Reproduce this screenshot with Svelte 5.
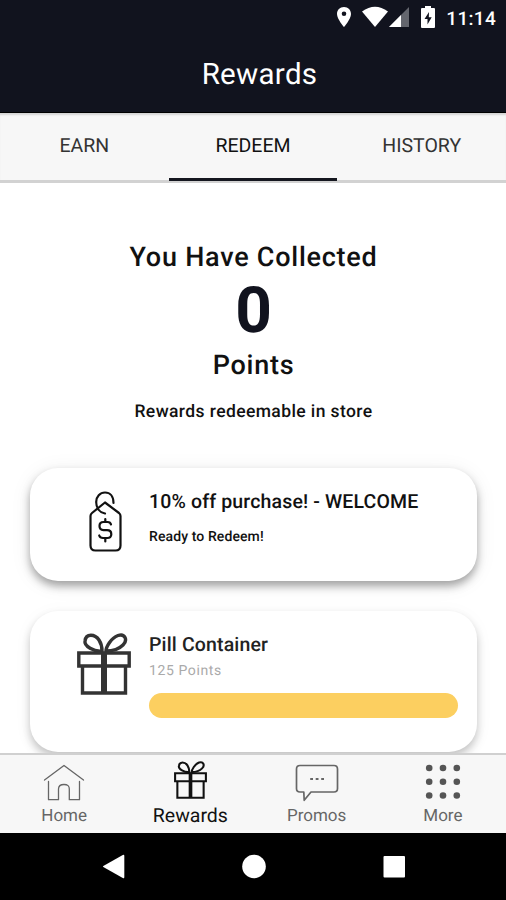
<script>
  let activeTab = $state('REDEEM');
  let activePage = $state('Rewards');

  const tabs = ['EARN', 'REDEEM', 'HISTORY'];
  const pages = ['Home', 'Rewards', 'Promos', 'More'];
  const points = 0;
</script>

{#snippet gift(width, height)}
  <svg class="gift" {width} {height} viewBox="0 0 54 62" fill="none" stroke="currentColor">
    <path d="M25 18C17 19 7 13 8 8C9 0 18 1 22 7C24 10 25 14 25 18Z" />
    <path d="M29 18C29 14 34 5 41 2.5C48 0 51 7 46 12C42 16 35 18 29 18Z" />
    <path d="M1.8 20H52.2V33H1.8Z" />
    <path d="M5.5 33V60H48.5V33" />
    <path class="band" d="M27 19V60" />
  </svg>
{/snippet}

<div class="phone">
  <header>
    <div class="status">
      <svg class="pin" width="16" height="22" viewBox="0 0 16 22">
        <path fill="#fff" fill-rule="evenodd" d="M8 1C3.8 1 1 4 1 8C1 13 8 21 8 21S15 13 15 8C15 4 12.2 1 8 1ZM8 5.5A2.3 2.3 0 1 1 8 10.1A2.3 2.3 0 1 1 8 5.5Z" />
      </svg>
      <svg class="wifi" width="28" height="22" viewBox="0 0 28 22">
        <path fill="#fff" d="M1 5.5Q14-4 27 5.5L14 21Z" />
      </svg>
      <svg class="signal" width="20" height="22" viewBox="0 0 20 22">
        <path fill="#64666e" d="M0 21L20 1V21Z" />
        <path fill="#fff" d="M0 21L12 9V21Z" />
      </svg>
      <svg class="battery" width="14" height="22" viewBox="0 0 14 22">
        <path fill="#fff" d="M4 0H10V2H13Q14 2 14 3V21Q14 22 13 22H1Q0 22 0 21V3Q0 2 1 2H4Z" />
        <path fill="#11131e" d="M8 6L3.5 13H6.5V18.5L10.7 11.2H7.8Z" />
      </svg>
      <time>11:14</time>
    </div>
    <h1>Rewards</h1>
  </header>

  <div class="tabs" role="tablist">
    {#each tabs as tab}
      <button role="tab" class:active={activeTab === tab} aria-selected={activeTab === tab} onclick={() => (activeTab = tab)}>
        {tab}
      </button>
    {/each}
  </div>

  <main>
    <section class="balance">
      <h2>You Have Collected</h2>
      <strong>{points}</strong>
      <h2 class="unit">Points</h2>
      <p>Rewards redeemable in store</p>
    </section>

    <article class="card">
      <div class="picture">
        <svg class="tag" width="36" height="64" viewBox="0 0 36 64" fill="none" stroke="#111" stroke-width="2.2" stroke-linecap="round" stroke-linejoin="round">
          <path d="M18 12.5L32 23Q33.5 24.2 33.5 26V55.5Q33.5 60.5 28.5 60.5H8.5Q3.5 60.5 3.5 55.5V26Q3.5 24.2 5 23Z" />
          <path d="M26.5 13C26.5 6 23 2.5 18 2.5S9.2 6.5 9.2 12C9.2 18 12.5 22.5 18 23.5" />
          <path d="M24 34.5Q23.5 32 20.5 32H16.5Q12.5 32 12.5 36T16.5 40.2H20Q24.3 40.2 24.3 44.2T20 48H16Q13 48 12.2 45.5M18.3 29V32M18.3 48V51.5" />
        </svg>
      </div>
      <div class="info">
        <h3>10% off purchase! - WELCOME</h3>
        <p class="ready">Ready to Redeem!</p>
      </div>
    </article>

    <article class="card locked">
      <div class="picture">{@render gift(54, 62)}</div>
      <div class="info">
        <h3>Pill Container</h3>
        <p class="cost">125 Points</p>
        <div class="progress"></div>
      </div>
    </article>
  </main>

  <nav class="pages">
    {#each pages as page}
      <button class:active={activePage === page} onclick={() => (activePage = page)}>
        {#if page === 'Home'}
          <svg width="42" height="40" viewBox="0 0 42 40" fill="none" stroke="currentColor" stroke-width="1.3" stroke-linecap="round" stroke-linejoin="round">
            <path d="M1.5 18L21 3.5L40.5 18M5.5 19.5V37.7H15.5V27Q15.5 22.5 21 22.5T26.3 27V37.7H36.5V19.5" />
          </svg>
        {:else if page === 'Rewards'}
          {@render gift(33, 38)}
        {:else if page === 'Promos'}
          <svg width="44" height="40" viewBox="0 0 44 40" fill="none" stroke="currentColor" stroke-width="1.7" stroke-linejoin="round">
            <path d="M5 3.5H39Q42.5 3.5 42.5 7V26.5Q42.5 30 39 30H16L9.2 38.3L8.8 30H5Q1.5 30 1.5 26.5V7Q1.5 3.5 5 3.5Z" />
            <path stroke-width="2" d="M15.2 17H18M20.7 17H23.5M26.2 17H29" />
          </svg>
        {:else}
          <svg width="36" height="40" viewBox="0 0 36 40" fill="#555">
            {#each [6, 19.7, 33.5] as y}
              {#each [4.2, 18, 31.8] as x}
                <circle cx={x} cy={y} r="3.3" />
              {/each}
            {/each}
          </svg>
        {/if}
        <span>{page}</span>
      </button>
    {/each}
  </nav>

  <footer>
    <svg width="24" height="26" viewBox="0 0 24 26" fill="#fff"><path d="M1.3 12L20.8 1Q22.3.3 22.3 2V23Q22.3 24.7 20.8 24L1.3 13Q.5 12.5 1.3 12Z" /></svg>
    <svg width="24" height="26" viewBox="0 0 24 26" fill="#fff"><circle cx="12" cy="12.5" r="11.8" /></svg>
    <svg width="24" height="26" viewBox="0 0 24 26" fill="#fff"><rect x="1.5" y="2" width="21.5" height="21.5" rx="1" /></svg>
  </footer>
</div>

<style>
  :global(body) {
    margin: 0;
    background: #fff;
  }

  .phone {
    width: 506px;
    height: 900px;
    display: flex;
    flex-direction: column;
    overflow: hidden;
    font-family: Roboto, sans-serif;
    text-rendering: geometricPrecision;
    color: #111;
    background: #fff;
  }

  h1, h2, h3, p {
    margin: 0;
  }

  button {
    border: 0;
    padding: 0;
    background: none;
    font-family: inherit;
    text-rendering: inherit;
    cursor: pointer;
  }

  svg {
    display: block;
    flex: none;
  }

  header {
    height: 112px;
    flex: none;
    background: #11131e;
    border-bottom: 1px solid #000;
    color: #fff;
  }

  .status {
    height: 34px;
    display: flex;
    align-items: center;
    justify-content: flex-end;
    padding-right: 10px;
  }

  .wifi {
    margin-left: 9px;
  }

  .battery {
    margin-left: 12px;
    margin-right: 11px;
  }

  time {
    padding-top: 3px;
    font-size: 19px;
    font-weight: 500;
    letter-spacing: 0.3px;
  }

  h1 {
    line-height: 36px;
    margin-top: 23px;
    padding-left: 13px;
    text-align: center;
    font-size: 29.5px;
    font-weight: 400;
    letter-spacing: 0.3px;
  }

  .tabs {
    display: flex;
    height: 67px;
    flex: none;
    background: #f7f7f7;
    box-shadow: inset 0 3px 2px -1px #d4d4d4;
    border-bottom: 3px solid #d2d2d2;
    position: relative;
  }

  .tabs button {
    flex: 1;
    height: 68px;
    box-sizing: border-box;
    border-bottom: 3px solid transparent;
    font-size: 19.5px;
    color: #333;
  }

  .tabs .active {
    border-color: #15171f;
    color: #111;
  }

  main {
    flex: 1;
    min-height: 0;
    overflow: hidden;
    padding: 0 29px 0 30px;
  }

  .balance {
    display: flex;
    flex-direction: column;
    align-items: center;
    padding-top: 56px;
    height: 229px;
  }

  h2 {
    font-size: 27px;
    line-height: 36px;
    font-weight: 500;
    letter-spacing: 0.75px;
  }

  strong {
    font-size: 64px;
    line-height: 71px;
    font-weight: 700;
    color: #11131e;
  }

  .unit {
    margin-top: 1px;
  }

  .balance p {
    margin-top: 17px;
    font-size: 17.5px;
    line-height: 24px;
    font-weight: 500;
    letter-spacing: 0.4px;
  }

  .card {
    display: flex;
    height: 113px;
    margin-bottom: 30px;
    border-radius: 28px;
    background: #fff;
    box-shadow: 0 5px 9px rgba(0, 0, 0, 0.34), 0 3px 22px rgba(0, 0, 0, 0.07);
  }

  .locked {
    height: 141px;
    box-shadow: 0 5px 9px rgba(0, 0, 0, 0.22), 0 3px 20px rgba(0, 0, 0, 0.04);
  }

  .picture {
    width: 119px;
    flex: none;
    display: flex;
    justify-content: flex-end;
    align-items: flex-start;
    box-sizing: border-box;
    padding: 22px 18px 0 0;
  }

  .tag {
    margin-right: 8px;
  }

  .info {
    flex: 1;
    padding: 21px 19px 0 0;
  }

  h3 {
    font-size: 19.5px;
    line-height: 26px;
    font-weight: 500;
    letter-spacing: 0.15px;
    white-space: nowrap;
  }

  .locked h3 {
    color: #222;
  }

  .ready {
    margin-top: 12px;
    font-size: 14px;
    line-height: 20px;
    font-weight: 500;
    letter-spacing: 0.1px;
  }

  .cost {
    margin-top: 4px;
    font-size: 14px;
    line-height: 18px;
    letter-spacing: 0.6px;
    color: #aaa;
  }

  .progress {
    height: 25px;
    margin-top: 13px;
    border-radius: 13px;
    background: #fccf60;
  }

  .gift {
    stroke-width: 3.4;
    color: #333;
  }

  .band {
    stroke-width: 6;
  }

  .pages {
    display: flex;
    height: 80px;
    flex: none;
    box-sizing: border-box;
    border-top: 2px solid #d0d0d0;
    padding-left: 1px;
    background: #f7f7f7;
    position: relative;
  }

  .pages button {
    flex: 1;
    display: flex;
    flex-direction: column;
    align-items: center;
    padding-top: 7px;
    font-size: 17px;
    line-height: 22px;
    color: #666;
  }

  .pages span {
    margin-top: 3px;
  }

  .pages .active {
    padding-top: 6px;
    font-size: 19.5px;
    color: #111;
  }

  .pages .gift {
    color: #111;
    margin-bottom: 3px;
  }

  footer {
    height: 67px;
    flex: none;
    display: flex;
    justify-content: center;
    align-items: center;
    gap: 116px;
    padding-left: 1px;
    background: #000;
  }
</style>
